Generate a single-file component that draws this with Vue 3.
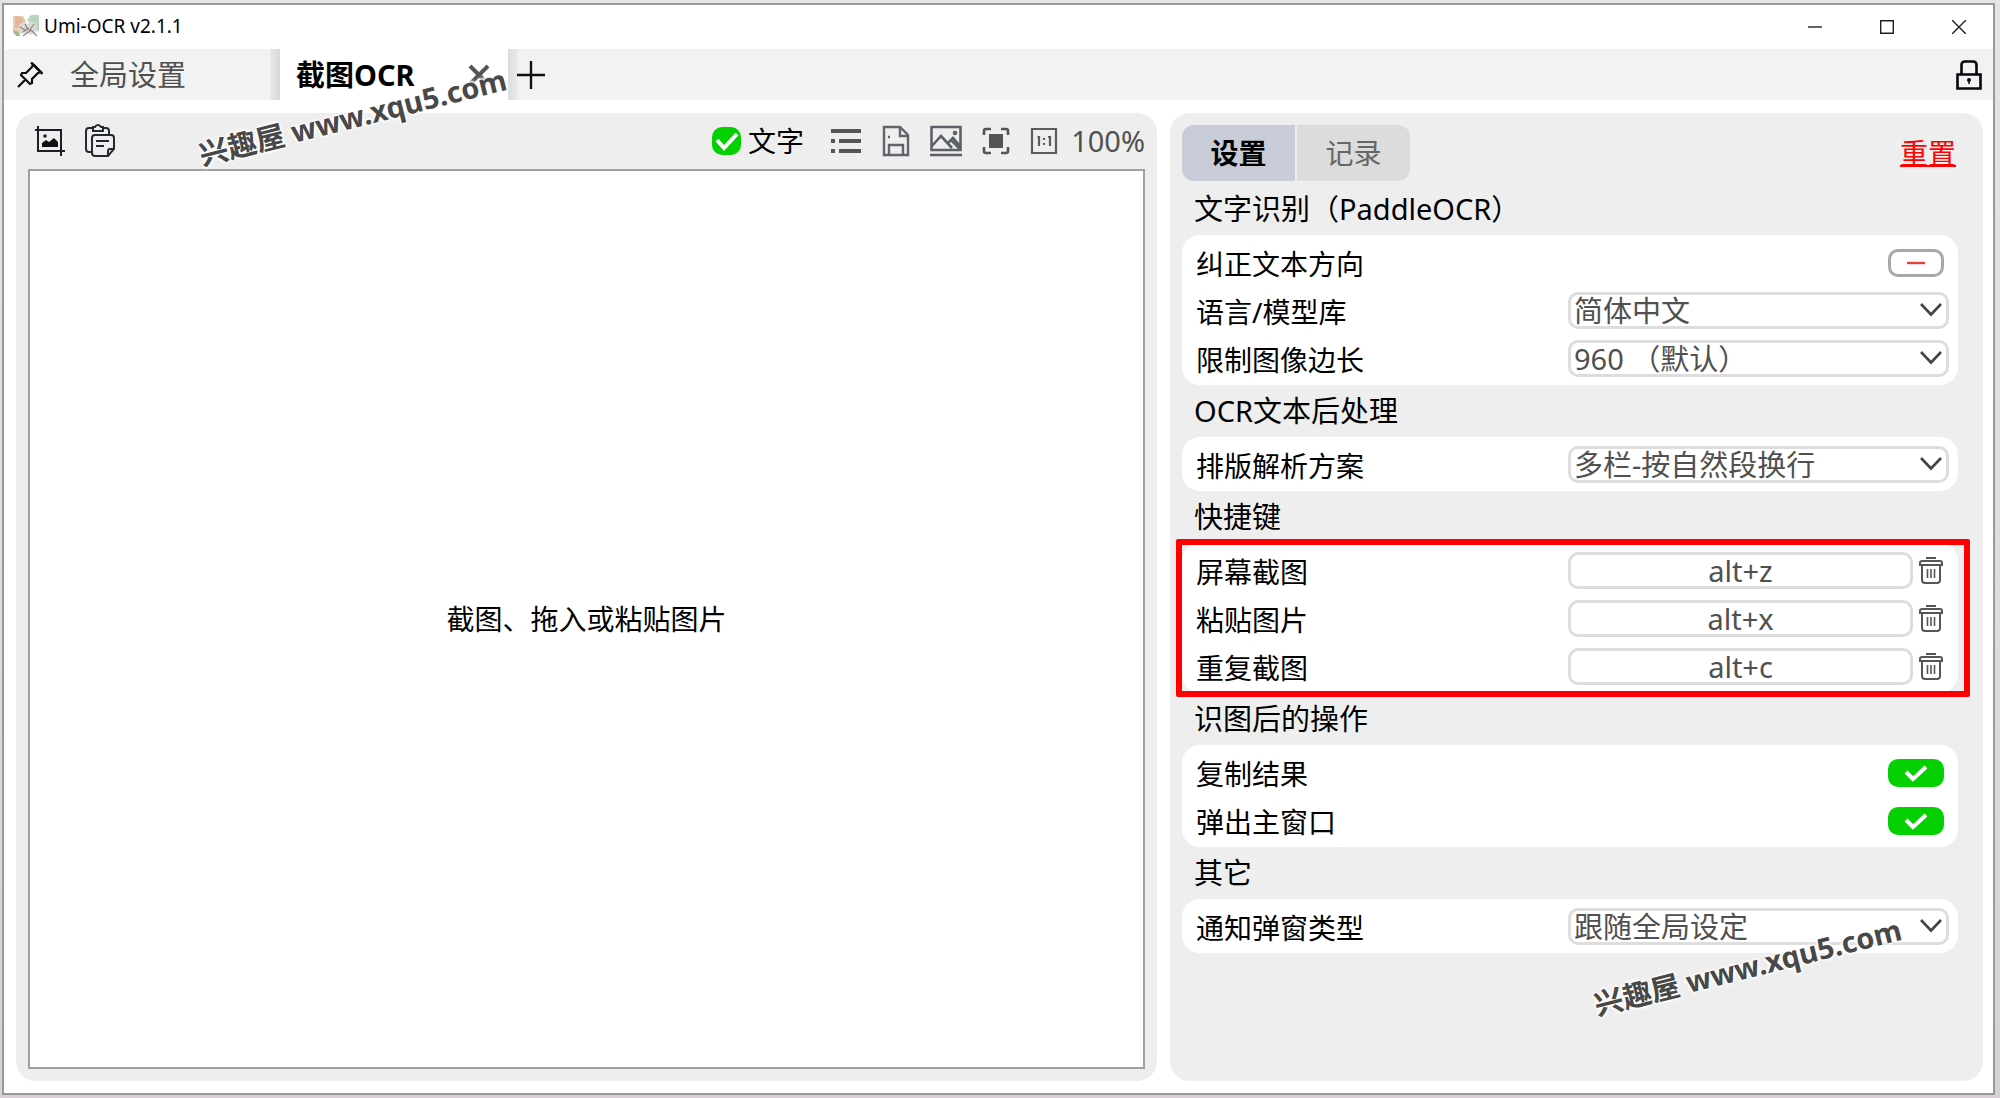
<script setup>
import { reactive, ref } from 'vue'

const sections = reactive([
  {
    title: '文字识别（PaddleOCR）',
    rows: [
      { id: 'direction', label: '纠正文本方向', type: 'toggle', value: false },
      { id: 'language', label: '语言/模型库', type: 'select', value: '简体中文' },
      { id: 'limit', label: '限制图像边长', type: 'select', value: '960 （默认）' }
    ]
  },
  {
    title: 'OCR文本后处理',
    rows: [{ id: 'layout', label: '排版解析方案', type: 'select', value: '多栏-按自然段换行' }]
  },
  {
    title: '快捷键',
    marked: true,
    rows: [
      { id: 'capture', label: '屏幕截图', type: 'hotkey', value: 'alt+z' },
      { id: 'paste', label: '粘贴图片', type: 'hotkey', value: 'alt+x' },
      { id: 'repeat', label: '重复截图', type: 'hotkey', value: 'alt+c' }
    ]
  },
  {
    title: '识图后的操作',
    rows: [
      { id: 'copy', label: '复制结果', type: 'toggle', value: true },
      { id: 'popup', label: '弹出主窗口', type: 'toggle', value: true }
    ]
  },
  {
    title: '其它',
    rows: [{ id: 'notice', label: '通知弹窗类型', type: 'select', value: '跟随全局设定' }]
  }
])
const showText = ref(true)
</script>

<template>
  <div class="desktop">
    <div class="window">
      <header class="titlebar">
        <svg class="logo" width="26" height="24" viewBox="0 0 26 24">
          <path d="M0 1h10l3 5-2 8-5 5H0z" fill="#e9cdb4" />
          <path d="M2 2c4-2 8 0 9 5l-3 5-6 1z" fill="#e3b795" />
          <path d="M14 5l4-5h8v17l-5-3z" fill="#bcd3bd" />
          <path d="M0 15l6 2 1 4H3z" fill="#9fb98a" />
          <path d="M6 10l4-3 4 2 5-3 4 3 1 7-6 4-5-2-6 1z" fill="#dcdad8" />
          <path d="M7 12l5 3m0-6l3 6m6-6l-5 7m-6 5l8-6m0 0l6 6M10 17l6-4" stroke="#8a8582" stroke-width="1.2" fill="none" />
        </svg>
        <span class="name">Umi-OCR v2.1.1</span>
        <button class="win" aria-label="最小化"><svg width="14" height="14" viewBox="0 0 14 14"><path d="M0 7h14" /></svg></button>
        <button class="win" aria-label="最大化"><svg width="14" height="14" viewBox="0 0 14 14"><path d="M.7 .7h12.6v12.6H.7z" /></svg></button>
        <button class="win" aria-label="关闭"><svg width="14" height="14" viewBox="0 0 14 14"><path d="M0 0l14 14M14 0L0 14" /></svg></button>
      </header>

      <nav class="tabs">
        <button class="pin" aria-label="置顶">
          <svg width="28" height="28" viewBox="0 0 28 28" fill="none" stroke="#0b0b12" stroke-width="2.2">
            <path d="M17 3l8 8-3 1-6 6v4l-2 1-9-9 1-2h4l6-6z" /><path d="M15 1.500l11.500 11.500" /><path d="M10 18l-8 8" />
          </svg>
        </button>
        <button class="tab">全局设置</button>
        <div class="tab active">
          <span>截图OCR</span>
          <button class="close" aria-label="关闭标签">
            <svg width="22" height="22" viewBox="0 0 22 22"><path d="M2 2l18 18M20 2L2 20" stroke="#555" stroke-width="4" /></svg>
          </button>
        </div>
        <button class="add" aria-label="新建标签">
          <svg width="28" height="28" viewBox="0 0 28 28"><path d="M14 0v28M0 14h28" stroke="#111" stroke-width="2.4" /></svg>
        </button>
        <button class="lock" aria-label="锁定">
          <svg width="26" height="30" viewBox="0 0 26 30" fill="none" stroke="#06060f" stroke-width="2.600">
            <path d="M1.500 14.500h23v14h-23z" /><path d="M5.500 14V5q0-3.500 3.500-3.500h8q3.500 0 3.500 3.500v9" />
            <circle cx="13" cy="20" r="1" stroke-width="2" /><path d="M13 20v4" stroke-width="1.500" />
          </svg>
        </button>
      </nav>

      <main class="main">
        <section class="panel viewer">
          <div class="toolbar">
            <button class="tool" aria-label="屏幕截图">
              <svg width="30" height="30" viewBox="0 0 30 30" fill="none" stroke="#1c1f26" stroke-width="2">
                <path d="M3 0v25h27M0 4h26v26" /><circle cx="10" cy="10" r="1.800" fill="#1c1f26" stroke="none" />
                <path d="M7 21v-4l4-3 3 2 5-4 4 4v5z" fill="#111" stroke="none" />
              </svg>
            </button>
            <button class="tool" aria-label="粘贴图片">
              <svg width="32" height="34" viewBox="1 0 32 34" fill="none" stroke="#252932" stroke-width="2">
                <path d="M7 28H5q-3 0-3-3V7q0-3 3-3h4m10 0h3q3 0 3 3v3" />
                <path d="M9 3h2q1-2 3-2t3 2h2v4H9z" /><path d="M11 11h16q3 0 3 3v11l-6 7H11q-3 0-3-3V14q0-3 3-3z" />
                <path d="M30 25h-4q-2 0-2 2v5M12 17h13M12 22h8" />
              </svg>
            </button>
            <label class="showtext">
              <span class="tick small">
                <input v-model="showText" type="checkbox" />
                <svg width="24" height="20" viewBox="0 0 24 20"><path d="M2 9l7 8L22 3" fill="none" stroke="#fff" stroke-width="4" /></svg>
              </span>
              文字
            </label>
            <button class="tool" aria-label="列表">
              <svg width="32" height="28" viewBox="0 0 32 28" fill="#555"><path d="M1 2h30v4H1zM1 12h4v4H1zM9 12h22v4H9zM1 22h4v4H1zM9 22h22v4H9z" /></svg>
            </button>
            <button class="tool" aria-label="保存">
              <svg width="28" height="32" viewBox="0 0 28 32" fill="none" stroke="#626469" stroke-width="2.400">
                <path d="M2 2h16l8 8v20H2z" /><path d="M18 2v9h8M7 30V20h14v10" /><path d="M6 12h2" />
              </svg>
            </button>
            <button class="tool" aria-label="图片">
              <svg width="32" height="32" viewBox="0 0 32 32" fill="none" stroke="#5c6068" stroke-width="2.600">
                <path d="M1.500 2h29v23h-29zM0 30h32" /><path d="M2 21l9-10 11 12M18 18l5-5 8 9M21 15l9 9" /><circle cx="25" cy="8" r="1" />
              </svg>
            </button>
            <button class="tool" aria-label="适应窗口">
              <svg width="28" height="28" viewBox="0 0 28 28" fill="none" stroke="#555" stroke-width="2.600">
                <path d="M2 8V4q0-2 2-2h5M19 2h5q2 0 2 2v4M26 20v4q0 2-2 2h-5M9 26H4q-2 0-2-2v-4" /><path d="M7 7h14v14H7z" fill="#555" stroke="none" />
              </svg>
            </button>
            <button class="tool" aria-label="原始大小">
              <svg width="28" height="28" viewBox="0 0 28 28" fill="none" stroke="#5c5c60" stroke-width="2.200">
                <path d="M2 2h24v24H2z" /><path d="M9 9v10M20 9v10M7.500 10H9M18 10h2M14 11v2M14 16v2" />
              </svg>
            </button>
            <span class="zoom">100%</span>
          </div>
          <div class="canvas">截图、拖入或粘贴图片</div>
        </section>

        <section class="panel settings">
          <div class="head">
            <button class="seg on">设置</button>
            <button class="seg">记录</button>
            <a class="reset" href="#">重置</a>
          </div>
          <template v-for="s in sections" :key="s.title">
            <h2>{{ s.title }}</h2>
            <div class="card" :class="{ marked: s.marked }">
              <div v-for="r in s.rows" :key="r.id" class="row">
                <label :for="r.id">{{ r.label }}</label>
                <span v-if="r.type === 'toggle'" class="tick" :class="{ off: !r.value }">
                  <input :id="r.id" v-model="r.value" type="checkbox" />
                  <svg v-if="r.value" width="24" height="20" viewBox="0 0 24 20"><path d="M2 9l7 7L22 4" fill="none" stroke="#fff" stroke-width="4" /></svg>
                  <svg v-else width="18" height="4" viewBox="0 0 18 4"><path d="M0 2h18" stroke="#e8403a" stroke-width="2.400" /></svg>
                </span>
                <span v-else-if="r.type === 'select'" class="select">
                  <select :id="r.id" v-model="r.value"><option>{{ r.value }}</option></select>
                  <svg width="22" height="14" viewBox="0 0 22 14"><path d="M1 1l10 10.500L21 1" fill="none" stroke="#444" stroke-width="2.600" /></svg>
                </span>
                <span v-else class="hotkey">
                  <input :id="r.id" v-model="r.value" type="text" />
                  <button aria-label="清除">
                    <svg width="24" height="28" viewBox="0 0 24 28" fill="none" stroke="#565656" stroke-width="2">
                      <path d="M7 2h10" /><path d="M1 9V7q0-2 2-2h18q2 0 2 2v2z" /><path d="M3 9v15q0 3 3 3h12q3 0 3-3V9" /><path d="M8.500 13v9M12 13v9M15.500 13v9" stroke-width="1.600" />
                    </svg>
                  </button>
                </span>
              </div>
            </div>
          </template>
          <span class="watermark low">兴趣屋 www.xqu5.com</span>
        </section>
      </main>
      <span class="watermark high">兴趣屋 www.xqu5.com</span>
    </div>
  </div>
</template>

<style>
body {
  margin: 0;
  background: #e2e1e2;
}
</style>

<style scoped>
* {
  box-sizing: border-box;
}
.desktop {
  min-height: 100vh;
  display: flex;
  padding: 3px 5px 3px 2px;
  background: linear-gradient(#e4e4e4, #dedede 50%, #d9d0d9);
  font: 29px/36px "Noto Sans", "Noto Sans CJK SC", sans-serif;
  color: #000;
}
button,
input,
select {
  font: inherit;
  color: inherit;
  margin: 0;
  padding: 0;
  border: 0;
  background: none;
}
svg {
  display: block;
  flex: none;
}
.window {
  position: relative;
  flex: 1;
  display: flex;
  flex-direction: column;
  border: 2px solid #999;
  background: #fff;
}
.titlebar {
  display: flex;
  align-items: center;
  height: 44px;
  padding-left: 9px;
  font-size: 19px;
}
.name {
  flex: 1;
  padding: 0 0 2px 5px;
}
.win {
  display: flex;
  justify-content: center;
  align-items: center;
  width: 72px;
  height: 42px;
}
.win:last-child {
  margin-right: -2px;
}
.win svg {
  fill: none;
  stroke: #222;
  stroke-width: 1.4;
}
.tabs {
  display: flex;
  height: 51px;
  background: #f2f2f2;
}
.pin {
  width: 50px;
  padding-left: 12px;
}
.tab {
  width: 226px;
  padding: 0 16px;
  color: #505050;
  text-align: left;
  background: linear-gradient(90deg, #e9e9e9, #d8d8d8) right / 10px 100% no-repeat;
}
.active {
  display: flex;
  align-items: center;
  justify-content: space-between;
  width: 228px;
  padding-right: 18px;
  font-weight: 700;
  color: #000;
  background: #fff;
}
.add {
  padding: 0 9px;
  background: linear-gradient(90deg, #dcdcdc, #ebebeb) left / 10px 100% no-repeat;
}
.lock {
  margin-left: auto;
  padding: 0 11px;
}
.main {
  flex: 1;
  display: grid;
  grid-template-columns: minmax(0, 1141fr) minmax(0, 813fr);
  gap: 13px;
  padding: 13px 10px 12px 12px;
}
.panel {
  background: #eee;
  border-radius: 20px;
}
.viewer {
  display: flex;
  flex-direction: column;
  padding: 0 12px 12px;
}
.toolbar {
  display: flex;
  align-items: center;
  gap: 20px;
  height: 56px;
  padding-left: 7px;
}
.showtext {
  display: flex;
  align-items: center;
  gap: 7px;
  margin: 0 6px 0 auto;
}
.showtext,
.seg,
.reset,
.canvas,
.row label {
  font-size: 28px;
}
.zoom {
  margin-left: -7px;
  color: #505050;
}
.canvas {
  flex: 1;
  display: flex;
  align-items: center;
  justify-content: center;
  border: 2px solid #a0a0a0;
  background: #fff;
}
.settings {
  position: relative;
  padding: 12px 25px 12px 12px;
}
.head {
  display: flex;
  align-items: center;
  gap: 2px;
  margin-bottom: 2px;
}
.seg {
  width: 113px;
  height: 56px;
  color: #666;
  background: #dcdcdc;
  border-radius: 0 12px 12px 0;
}
.seg.on {
  font-weight: 700;
  color: #000;
  background: #c8ccd8;
  border-radius: 12px 0 0 12px;
}
.reset {
  margin: 0 2px 0 auto;
  color: #f00;
  text-underline-offset: 1px;
}
h2 {
  margin: 0;
  padding-left: 12px;
  font-size: 29px;
  line-height: 52px;
  font-weight: 400;
}
.card {
  padding: 3px 9px 3px 14px;
  border-radius: 18px;
  background: #fff;
}
.marked {
  position: relative;
}
.marked::after {
  content: "";
  position: absolute;
  inset: -4px -12px -4px -6px;
  border: 6px solid #f00;
  border-radius: 2px;
  pointer-events: none;
}
.row {
  display: flex;
  align-items: center;
  justify-content: space-between;
  height: 48px;
}
.row label {
  padding-top: 3px;
}
.tick {
  display: grid;
  place-items: center;
  margin: 2px 5px 0 0;
}
.tick > * {
  grid-area: 1 / 1;
}
.tick svg {
  pointer-events: none;
}
.tick input {
  appearance: none;
  width: 56px;
  height: 28px;
  border-radius: 10px;
  background: #04d004;
}
.tick.small {
  margin: 0;
}
.tick.small input {
  width: 29px;
}
.tick.off input {
  border: 3px solid #a8a8a8;
  background: #fff;
}
.select,
.hotkey {
  display: grid;
  width: 381px;
  color: #505050;
}
.select > * {
  grid-area: 1 / 1;
}
.select select {
  appearance: none;
  height: 37px;
  padding: 1px 0 0 3px;
  line-height: 30px;
  border: 3px solid #ddd;
  border-radius: 10px;
}
.select svg {
  place-self: center end;
  margin-right: 7px;
  pointer-events: none;
}
.hotkey {
  grid-template-columns: 345px 36px;
}
.hotkey input {
  height: 37px;
  min-width: 0;
  text-align: center;
  border: 3px solid #ddd;
  border-radius: 10px;
}
.hotkey button {
  display: grid;
  place-items: center;
}
.watermark {
  position: absolute;
  font-size: 29px;
  font-weight: 700;
  color: #484848;
  white-space: nowrap;
  text-shadow: 0 0 3px #fff, 0 0 3px #fff, 0 0 3px #fff, 0 0 4px #fff, 0 0 4px #fff;
  transform: rotate(-14deg);
  pointer-events: none;
}
.high {
  left: 191px;
  top: 94px;
}
.low {
  right: 78px;
  top: 836px;
}
</style>
